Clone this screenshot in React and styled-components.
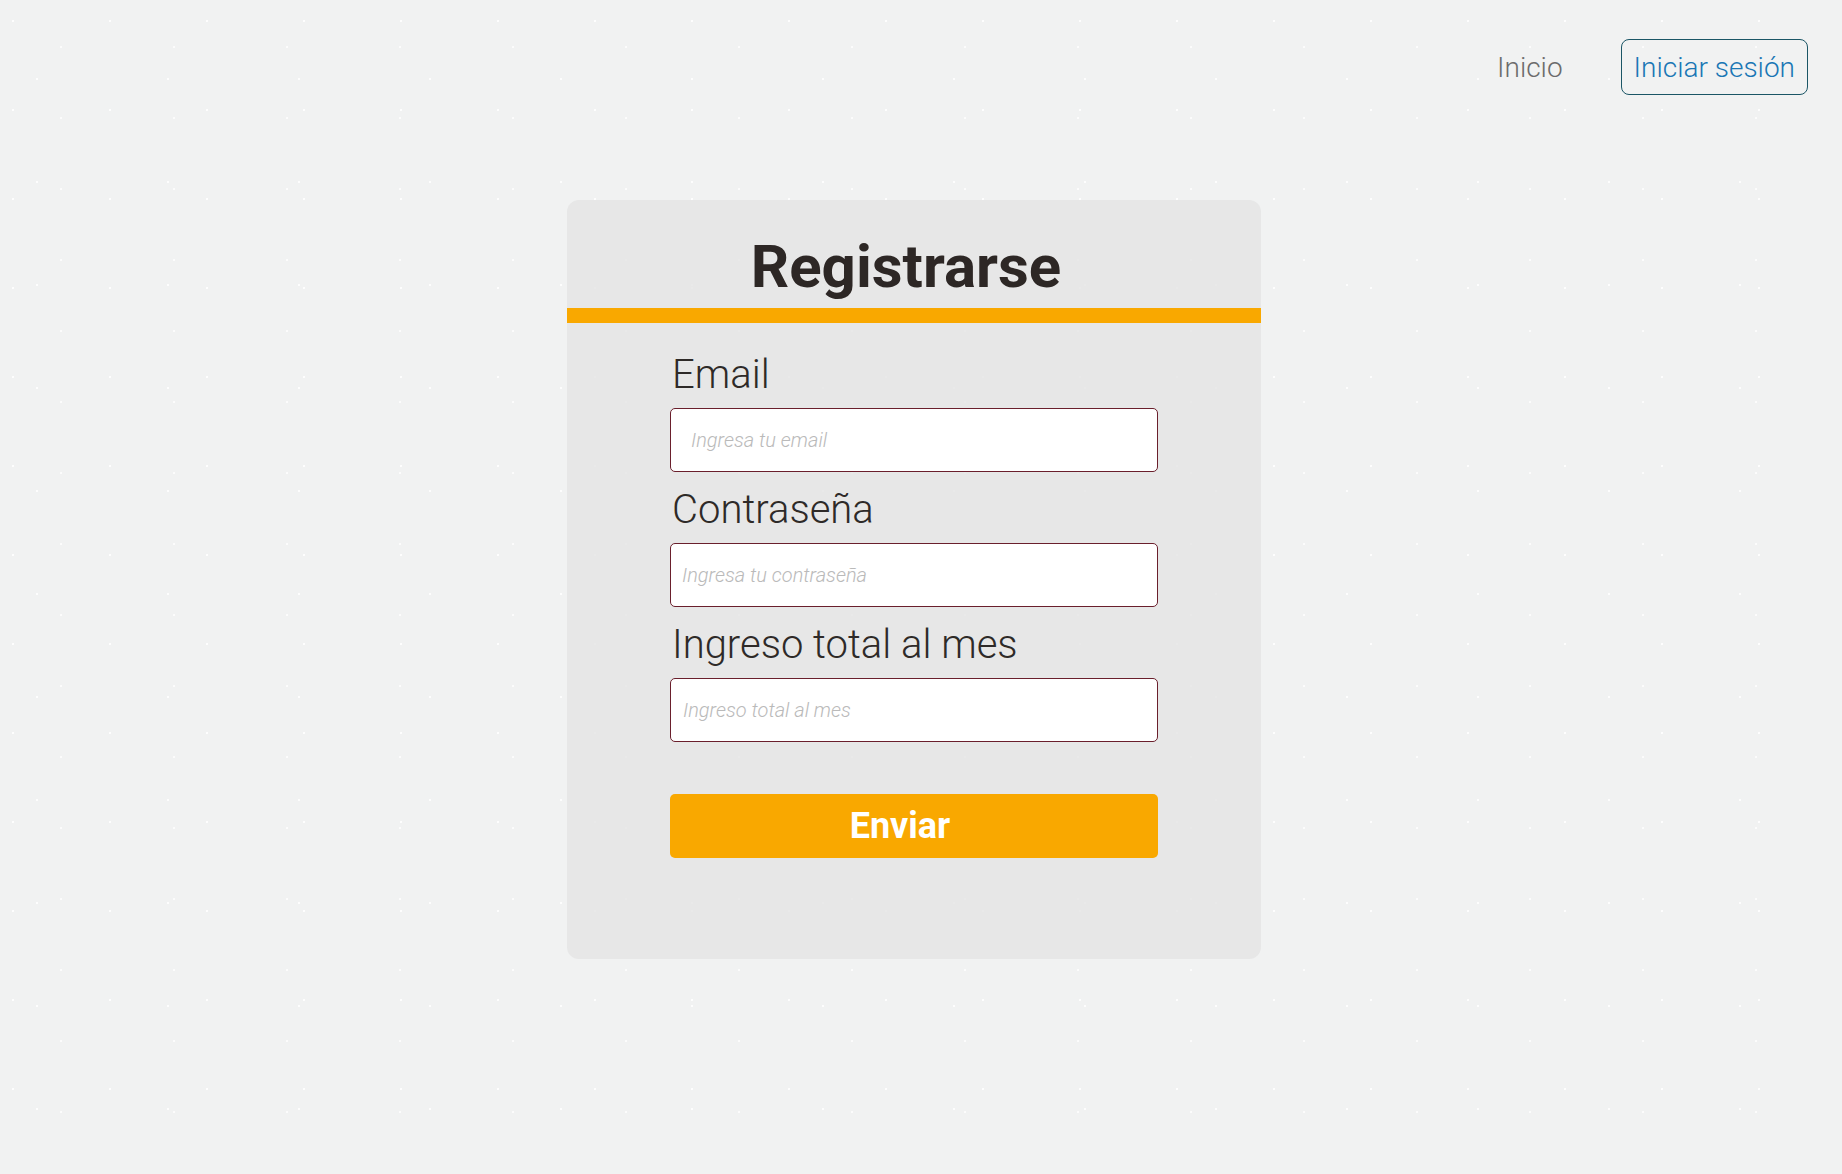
import React from "react";
import styled, { createGlobalStyle } from "styled-components";

const LIGHT = `"Roboto Light", Roboto, "Liberation Sans", sans-serif`;

const GlobalStyle = createGlobalStyle`
  html, body {
    margin: 0;
    padding: 0;
  }
  body {
    background-color: #f1f2f2;
    background-image:
      radial-gradient(circle at 13px 21px, rgba(255,255,255,0.95) 0.7px, transparent 1.4px),
      radial-gradient(circle at 61px 47px, rgba(255,255,255,0.9) 0.6px, transparent 1.3px),
      radial-gradient(circle at 37px 79px, rgba(255,255,255,0.85) 0.8px, transparent 1.5px),
      radial-gradient(circle at 88px 9px, rgba(255,255,255,0.8) 0.6px, transparent 1.2px);
    background-size: 97px 89px, 113px 71px, 131px 103px, 79px 67px;
    font-family: Roboto, "Liberation Sans", Arial, sans-serif;
  }
  * { box-sizing: border-box; }
`;

const Page = styled.div`
  min-height: 100vh;
`;

const Header = styled.header`
  display: flex;
  justify-content: flex-end;
  align-items: center;
  gap: 58px;
  padding: 39px 34px 0 0;
`;

const NavLink = styled.a`
  font-family: ${LIGHT};
  font-size: 28px;
  font-weight: 300;
  color: #6c6c6c;
  text-decoration: none;
  cursor: pointer;
`;

const LoginButton = styled.button`
  height: 56px;
  padding: 0 12px;
  border: 1px solid #1b5666;
  border-radius: 8px;
  background: transparent;
  color: #1a77b5;
  font-family: ${LIGHT};
  font-size: 28px;
  font-weight: 300;
  cursor: pointer;
`;

const Main = styled.main`
  display: flex;
  justify-content: center;
  padding: 105px 14px 0 0;
`;

const Card = styled.section`
  width: 694px;
  background: rgba(228, 228, 228, 0.82);
  border-radius: 12px;
  padding: 31px 0 101px;
`;

const Title = styled.h1`
  margin: 0;
  padding-right: 16px;
  text-align: center;
  font-family: Roboto, "Liberation Sans", sans-serif;
  font-size: 60px;
  line-height: 72px;
  font-weight: 700;
  color: #2d2725;
`;

const Bar = styled.div`
  height: 15px;
  margin-top: 5px;
  background: #f9a800;
`;

const Form = styled.form`
  width: 488px;
  margin: 28px auto 0;
  display: flex;
  flex-direction: column;
`;

const Field = styled.div`
  display: flex;
  flex-direction: column;
  & + & {
    margin-top: 14px;
  }
`;

const Label = styled.label`
  font-family: ${LIGHT};
  font-size: 40px;
  line-height: 48px;
  font-weight: 300;
  color: #2e2a28;
  margin-bottom: 9px;
  padding-left: 2px;
`;

const Input = styled.input`
  height: 64px;
  width: 100%;
  border: 1px solid #6a1f2c;
  border-radius: 5px;
  background: #ffffff;
  padding: 0 12px 0 ${(p) => p.$indent}px;
  font-family: ${LIGHT};
  font-size: 20px;
  font-style: italic;
  font-weight: 300;
  color: #333;
  outline: none;
  &::placeholder {
    color: #bababa;
    font-style: italic;
    font-weight: 300;
  }
`;

const SubmitButton = styled.button`
  margin-top: 52px;
  height: 64px;
  width: 100%;
  border: none;
  border-radius: 5px;
  background: #f9a800;
  color: #ffffff;
  padding: 0 28px 0 0;
  font-family: Roboto, "Liberation Sans", sans-serif;
  font-size: 36px;
  font-weight: 700;
  cursor: pointer;
`;

const fields = [
  { id: "email", label: "Email", placeholder: "Ingresa tu email", type: "email", indent: 20 },
  { id: "password", label: "Contraseña", placeholder: "Ingresa tu contraseña", type: "password", indent: 11 },
  { id: "income", label: "Ingreso total al mes", placeholder: "Ingreso total al mes", type: "text", indent: 12 },
];

export default function App() {
  return (
    <Page>
      <GlobalStyle />
      <Header>
        <NavLink href="#">Inicio</NavLink>
        <LoginButton type="button">Iniciar sesión</LoginButton>
      </Header>
      <Main>
        <Card>
          <Title>Registrarse</Title>
          <Bar />
          <Form onSubmit={(e) => e.preventDefault()}>
            {fields.map((f) => (
              <Field key={f.id}>
                <Label htmlFor={f.id}>{f.label}</Label>
                <Input id={f.id} type={f.type} placeholder={f.placeholder} $indent={f.indent} />
              </Field>
            ))}
            <SubmitButton type="submit">Enviar</SubmitButton>
          </Form>
        </Card>
      </Main>
    </Page>
  );
}
